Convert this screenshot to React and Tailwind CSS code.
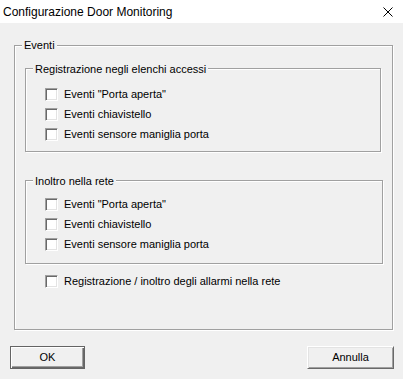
import { useState } from 'react';

const ui = { fontFamily: '"Liberation Sans", Arial, sans-serif' };

const CheckBox = ({ label, checked, onChange, className = '' }) => (
  <label className={`flex items-center h-[13px] cursor-default ${className}`}>
    <span
      onClick={onChange}
      className="w-[13px] h-[13px] shrink-0 bg-white border border-t-[#a0a0a0] border-l-[#a0a0a0] border-b-white border-r-white shadow-[inset_1px_1px_0_#696969,inset_-1px_-1px_0_#e3e3e3] flex items-center justify-center"
    >
      {checked && (
        <svg width="7" height="7" viewBox="0 0 7 7">
          <path d="M0 3 L2 5 L7 0" stroke="#000" strokeWidth="1.5" fill="none" />
        </svg>
      )}
    </span>
    <span className="ml-[6px] text-[11px] leading-[13px] text-black whitespace-nowrap">{label}</span>
  </label>
);

const GroupBox = ({ title, className = '', legendTop = 'top-[-7px]', children }) => (
  <div className={`relative border border-[#a0a0a0] shadow-[inset_1px_1px_0_#fff,1px_1px_0_#fff] ${className}`}>
    <span className={`absolute ${legendTop} left-[7px] px-[2px] bg-[#f0f0f0] text-[11px] leading-[13px] text-black whitespace-nowrap`}>
      {title}
    </span>
    {children}
  </div>
);

const eventLabels = ['Eventi "Porta aperta"', 'Eventi chiavistello', 'Eventi sensore maniglia porta'];

export default function App() {
  const [log, setLog] = useState([false, false, false]);
  const [fwd, setFwd] = useState([false, false, false]);
  const [alarms, setAlarms] = useState(false);

  const toggle = (arr, set, i) => set(arr.map((v, j) => (j === i ? !v : v)));

  return (
    <div className="w-[403px] h-[379px] flex flex-col bg-[#f0f0f0] overflow-hidden" style={ui}>
      {/* Barra del titolo */}
      <div className="h-[23px] bg-white flex items-center justify-between pl-[3px] pr-[10px] shrink-0">
        <span className="text-[12px] text-black">Configurazione Door Monitoring</span>
        <svg width="10" height="10" viewBox="0 0 10 10" className="mt-[1px]">
          <path d="M0.5 0.5 L9.5 9.5 M9.5 0.5 L0.5 9.5" stroke="#000" strokeWidth="1" />
        </svg>
      </div>

      {/* Gruppo Eventi */}
      <GroupBox title="Eventi" className="ml-[14px] mt-[22px] w-[379px] h-[285px] shrink-0">
        <div className="flex flex-col pl-[10px] pt-[22px]">
          <GroupBox title="Registrazione negli elenchi accessi" legendTop="top-[-6px]" className="w-[356px] h-[84px]">
            <div className="flex flex-col gap-[7px] pl-[19px] pt-[19px]">
              {eventLabels.map((l, i) => (
                <CheckBox key={l} label={l} checked={log[i]} onChange={() => toggle(log, setLog, i)} />
              ))}
            </div>
          </GroupBox>

          <GroupBox title="Inoltro nella rete" legendTop="top-[-6px]" className="mt-[28px] w-[358px] h-[84px]">
            <div className="flex flex-col gap-[7px] pl-[19px] pt-[17px]">
              {eventLabels.map((l, i) => (
                <CheckBox key={l} label={l} checked={fwd[i]} onChange={() => toggle(fwd, setFwd, i)} />
              ))}
            </div>
          </GroupBox>

          <CheckBox
            className="ml-[20px] mt-[11px]"
            label="Registrazione / inoltro degli allarmi nella rete"
            checked={alarms}
            onChange={() => setAlarms(!alarms)}
          />
        </div>
      </GroupBox>

      {/* Pulsanti */}
      <div className="flex justify-between pl-[10px] pr-[9px] mt-[16px]">
        <button className="w-[75px] h-[23px] bg-[#f0f0f0] border border-[#646464] shadow-[inset_1px_1px_0_#fff,inset_-1px_-1px_0_#696969,inset_-2px_-2px_0_#a0a0a0] text-[11px] text-black">
          OK
        </button>
        <button className="w-[87px] h-[23px] bg-[#f0f0f0] border border-t-white border-l-white border-b-[#696969] border-r-[#696969] shadow-[inset_1px_1px_0_#e3e3e3,inset_-1px_-1px_0_#a0a0a0] text-[11px] text-black">
          Annulla
        </button>
      </div>
    </div>
  );
}
